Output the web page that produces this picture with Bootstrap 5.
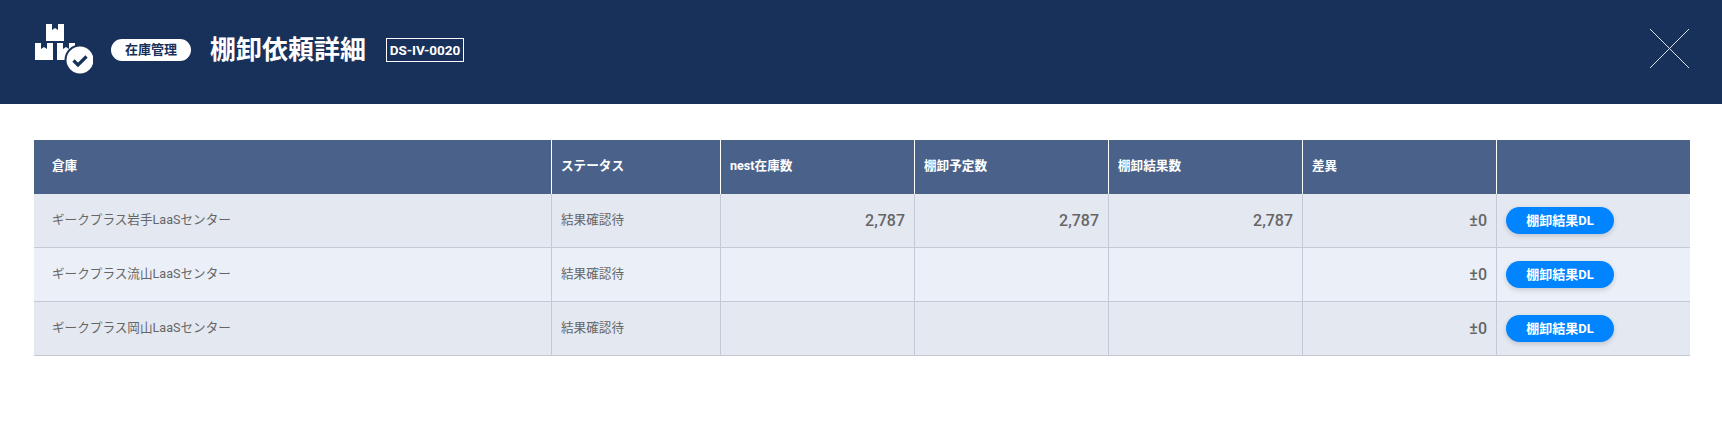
<!DOCTYPE html>
<html lang="ja">
<head>
  <meta charset="UTF-8" />
  <meta name="viewport" content="width=device-width, initial-scale=1.0"/>
  <title>棚卸依頼詳細</title>
  <link href="https://cdn.jsdelivr.net/npm/bootstrap@5.3.0/dist/css/bootstrap.min.css" rel="stylesheet" />
  <style>
    body {
      font-family: Roboto, "Noto Sans CJK JP", sans-serif;
      background-color: #fff;
    }

    .page-head {
      height: 104px;
      background-color: #18315a;
      padding: 0 33px 4px 35px;
    }

    .head-icon {
      margin-top: 2px;
    }

    .head-pill {
      width: 80px;
      height: 22px;
      margin-left: 18px;
      font-size: 13px;
      font-weight: 700;
      color: #18315a;
    }

    .head-title {
      margin: 0 0 0 19px;
      font-size: 26px;
      font-weight: 700;
      line-height: 1;
    }

    .head-code {
      width: 78px;
      height: 24px;
      margin-left: 20px;
      border: 1px solid #fff;
      font-size: 13.5px;
      font-weight: 700;
    }

    .head-close {
      width: 39px;
      height: 39px;
      margin-top: -3px;
      background: none;
      border: 0;
    }

    .stock-wrap {
      padding: 36px 32px 0 34px;
    }

    .stock-table {
      table-layout: fixed;
      border-collapse: separate;
      border-spacing: 0;
      width: 1656px;
      margin: 0;
      font-size: 12.6px;
      color: #666;
    }

    .stock-table th {
      height: 54px;
      padding: 0 9px 2px;
      background-color: #4a6289;
      color: #fff;
      font-size: 12.6px;
      font-weight: 700;
      vertical-align: middle;
      border: 0;
      border-right: 1px solid #fff;
    }

    .stock-table td {
      height: 54px;
      padding: 0 9px;
      vertical-align: middle;
      color: #666;
      border: 0;
      border-right: 1px solid #c5c9d6;
      border-bottom: 1px solid #c5c9d6;
    }

    .stock-table tr > :last-child {
      border-right: 0;
    }

    .stock-table .odd-row td {
      background-color: #e4e8f1;
    }

    .stock-table .even-row td {
      background-color: #ebf0f8;
    }

    .stock-table tr > :first-child {
      padding-left: 18px;
    }

    .col-store { width: 518px; }
    .col-status { width: 169px; }
    .col-num { width: 194px; }
    .col-action { width: 193px; }

    .stock-table td.num-cell {
      font-size: 16px;
      font-weight: 500;
    }

    .dl-btn {
      width: 108px;
      height: 27px;
      padding: 0;
      border: 0;
      background-color: #0084ff;
      color: #fff;
      font-size: 13px;
      font-weight: 700;
      line-height: 24px;
      box-shadow: 0 2px 5px rgba(0, 0, 0, .16);
    }
  </style>
</head>
<body>
  <header class="page-head d-flex align-items-center text-white">
    <svg class="head-icon" width="58" height="54" viewBox="0 0 58 54" aria-hidden="true">
      <!-- 箱3つとチェック -->
      <g fill="#fff">
        <path d="M11 0h6v6l3-2 3 2V0h6v17H11z"/>
        <path d="M0 19h6v6l3-2 3 2v-6h6v17H0z"/>
        <path d="M22 19h6v6l3-2 3 2v-6h6v17H22z"/>
      </g>
      <circle cx="45" cy="36" r="15.5" fill="#18315a"/>
      <circle cx="45" cy="36" r="13.5" fill="#fff"/>
      <path d="M38.5 36.5l4.5 4.5 8.5-8.5" fill="none" stroke="#18315a" stroke-width="3.2"/>
    </svg>
    <span class="head-pill d-flex align-items-center justify-content-center bg-white rounded-pill">在庫管理</span>
    <h1 class="head-title">棚卸依頼詳細</h1>
    <span class="head-code d-flex align-items-center justify-content-center">DS-IV-0020</span>
    <button class="head-close ms-auto p-0 d-flex" type="button" aria-label="閉じる">
      <svg width="39" height="39" viewBox="0 0 39 39"><path d="M0 0l39 39M39 0L0 39" stroke="#fff" stroke-width="1" opacity=".85"/></svg>
    </button>
  </header>

  <main class="stock-wrap">
    <table class="table stock-table">
      <colgroup>
        <col class="col-store"><col class="col-status"><col class="col-num"><col class="col-num"><col class="col-num"><col class="col-num"><col class="col-action">
      </colgroup>
      <thead>
        <tr>
          <th>倉庫</th>
          <th>ステータス</th>
          <th>nest在庫数</th>
          <th>棚卸予定数</th>
          <th>棚卸結果数</th>
          <th>差異</th>
          <th></th>
        </tr>
      </thead>
      <tbody>
        <tr class="odd-row">
          <td>ギークプラス岩手LaaSセンター</td>
          <td>結果確認待</td>
          <td class="num-cell text-end">2,787</td>
          <td class="num-cell text-end">2,787</td>
          <td class="num-cell text-end">2,787</td>
          <td class="num-cell text-end">±0</td>
          <td><button class="btn dl-btn rounded-pill" type="button">棚卸結果DL</button></td>
        </tr>
        <tr class="even-row">
          <td>ギークプラス流山LaaSセンター</td>
          <td>結果確認待</td>
          <td class="num-cell text-end"></td>
          <td class="num-cell text-end"></td>
          <td class="num-cell text-end"></td>
          <td class="num-cell text-end">±0</td>
          <td><button class="btn dl-btn rounded-pill" type="button">棚卸結果DL</button></td>
        </tr>
        <tr class="odd-row">
          <td>ギークプラス岡山LaaSセンター</td>
          <td>結果確認待</td>
          <td class="num-cell text-end"></td>
          <td class="num-cell text-end"></td>
          <td class="num-cell text-end"></td>
          <td class="num-cell text-end">±0</td>
          <td><button class="btn dl-btn rounded-pill" type="button">棚卸結果DL</button></td>
        </tr>
      </tbody>
    </table>
  </main>

  <script src="https://cdn.jsdelivr.net/npm/bootstrap@5.3.0/dist/js/bootstrap.bundle.min.js"></script>
</body>
</html>
